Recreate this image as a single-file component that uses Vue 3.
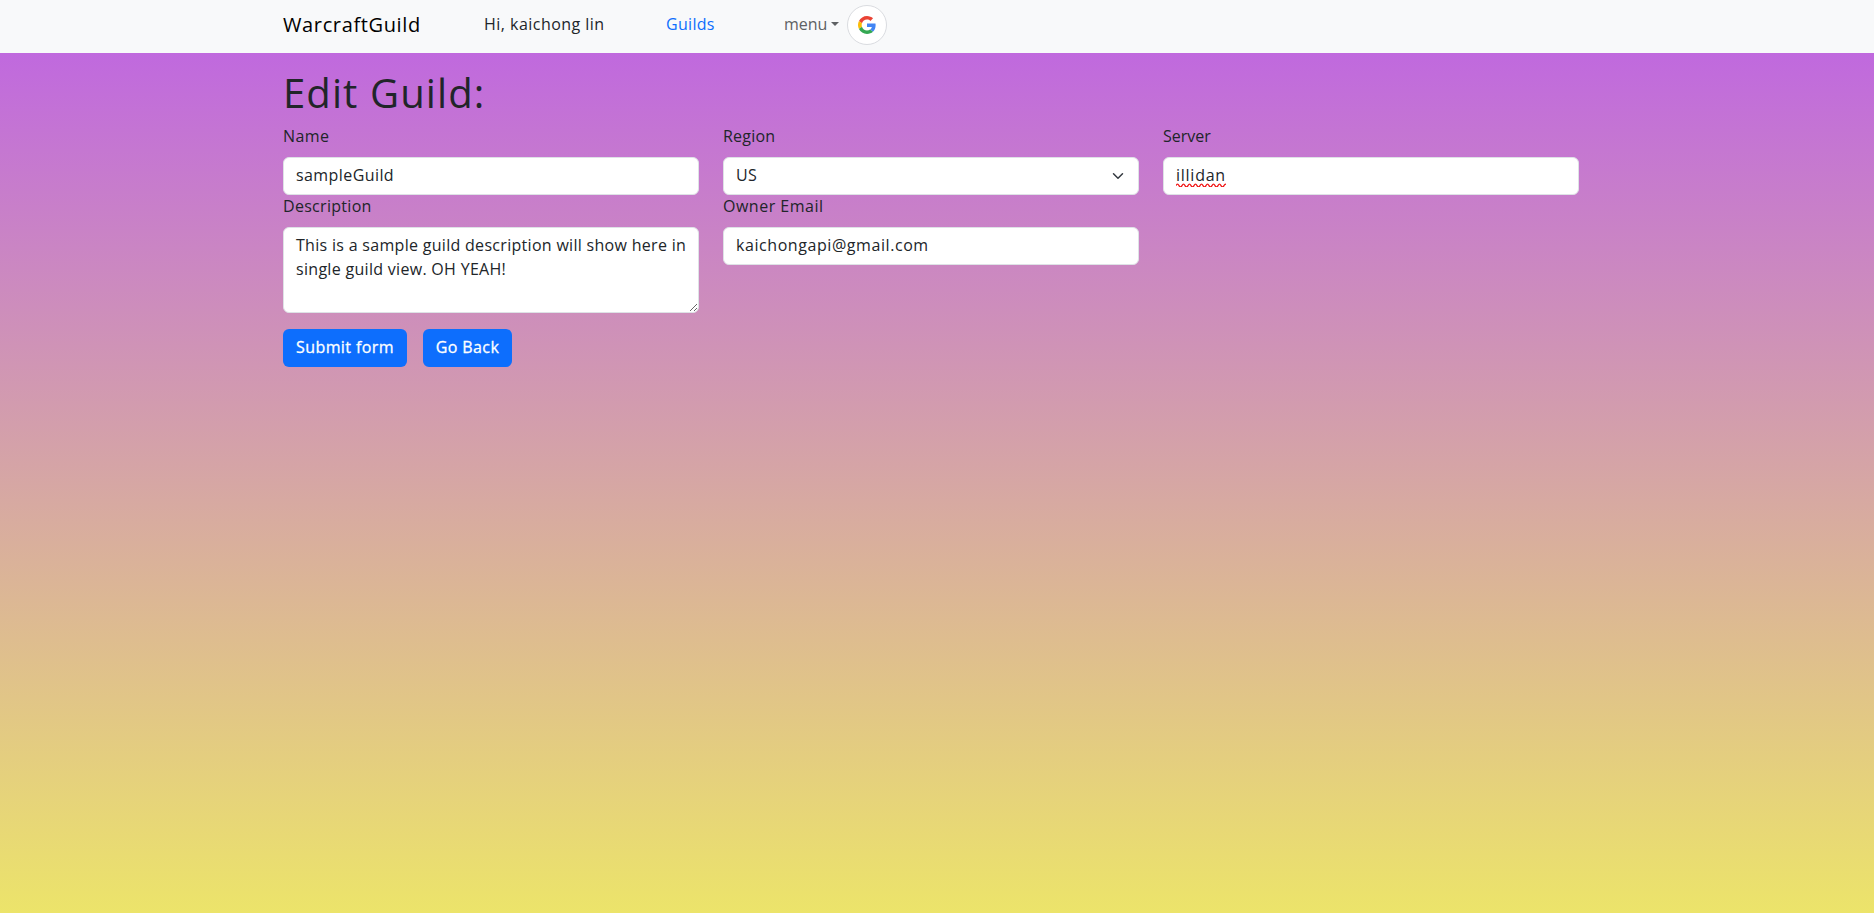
<script setup>
import { ref } from 'vue'

const guild = ref({
  name: 'sampleGuild',
  region: 'US',
  server: 'illidan',
  description: 'This is a sample guild description will show here in single guild view. OH YEAH!',
  email: 'kaichongapi@gmail.com',
})
</script>

<template>
  <div class="page">
    <nav class="navbar">
      <div class="container nav-inner">
        <a class="brand">WarcraftGuild</a>
        <span class="greeting">Hi, kaichong lin</span>
        <a class="guilds">Guilds</a>
        <a class="menu"><span class="menu-text">menu</span><i class="caret"></i></a>
        <button class="google" type="button" aria-label="Google">
          <svg viewBox="0 0 48 48" width="18" height="18">
            <path fill="#EA4335" d="M24 9.5c3.54 0 6.71 1.22 9.21 3.6l6.85-6.85C35.9 2.38 30.47 0 24 0 14.62 0 6.51 5.38 2.56 13.22l7.98 6.19C12.43 13.72 17.74 9.5 24 9.5z" />
            <path fill="#4285F4" d="M46.98 24.55c0-1.57-.15-3.09-.38-4.55H24v9.02h12.94c-.58 2.96-2.26 5.48-4.78 7.18l7.73 6c4.51-4.18 7.09-10.36 7.09-17.65z" />
            <path fill="#FBBC05" d="M10.53 28.59c-.48-1.45-.76-2.99-.76-4.59s.27-3.14.76-4.59l-7.98-6.19C.92 16.46 0 20.12 0 24c0 3.88.92 7.54 2.56 10.78l7.97-6.19z" />
            <path fill="#34A853" d="M24 48c6.48 0 11.93-2.13 15.89-5.81l-7.73-6c-2.15 1.45-4.92 2.3-8.16 2.3-6.26 0-11.57-4.22-13.47-9.91l-7.98 6.19C6.51 42.62 14.62 48 24 48z" />
          </svg>
        </button>
      </div>
    </nav>

    <main class="container">
      <h1>Edit Guild:</h1>
      <form @submit.prevent>
        <div class="grid">
          <div>
            <label class="l-name" for="name">Name</label>
            <input id="name" v-model="guild.name" class="control c-name" />
          </div>
          <div>
            <label class="l-region" for="region">Region</label>
            <div class="field">
              <select id="region" v-model="guild.region" class="control c-region">
                <option>US</option>
                <option>EU</option>
              </select>
              <svg class="chevron" viewBox="0 0 16 16" width="16" height="12">
                <path d="m2 5 6 6 6-6" fill="none" stroke="#343a40" stroke-width="2" stroke-linecap="round" stroke-linejoin="round" />
              </svg>
            </div>
          </div>
          <div>
            <label for="server">Server</label>
            <div class="field">
              <input id="server" v-model="guild.server" class="control c-server" />
              <svg class="squiggle" width="50" height="4" viewBox="0 0 50 4">
                <path d="M0 2.6 q1.5 -2.8 3 0 t3 0 3 0 3 0 3 0 3 0 3 0 3 0 3 0 3 0 3 0 3 0 3 0 3 0 3 0 3 0 3 0" fill="none" stroke="#f01818" stroke-width="1.3" />
              </svg>
            </div>
          </div>
          <div>
            <label class="l-desc" for="desc">Description</label>
            <textarea id="desc" v-model="guild.description" class="control c-desc" rows="3" spellcheck="false"></textarea>
          </div>
          <div>
            <label class="l-owner" for="email">Owner Email</label>
            <input id="email" v-model="guild.email" class="control c-email" />
          </div>
        </div>
        <div class="actions">
          <button class="btn submit" type="submit">Submit form</button>
          <button class="btn back" type="button">Go Back</button>
        </div>
      </form>
    </main>
  </div>
</template>

<style>
body { margin: 0; overflow: hidden; }
</style>

<style scoped>
* { box-sizing: border-box; }
.page {
  height: 100vh;
  display: flex;
  flex-direction: column;
  font: 400 16px/24px "Open Sans", sans-serif;
  color: #212529;
  background: linear-gradient(#c069de 53px, #ece46a);
}
.container { width: 1308px; margin: 0 auto; padding-right: 12px; }
.navbar { height: 53px; background: #f8f9fa; }
.nav-inner { display: flex; height: 48px; align-items: center; white-space: nowrap; }
.brand { width: 201px; font-size: 20px; color: #000; letter-spacing: 0.63px; padding-top: 1px; }
.greeting { width: 182px; letter-spacing: 0.47px; }
.guilds { width: 118px; color: #0d6efd; letter-spacing: 0.3px; }
.menu { width: 63px; color: #5e6163; display: flex; align-items: center; }
.menu-text { width: 47px; }
.caret { border: 4.5px solid transparent; border-top-color: currentColor; border-bottom: 0; }
.google {
  width: 40px; height: 40px; padding: 0; border: 1px solid #dadce0; border-radius: 50%;
  background: #fff; display: flex; align-items: center; justify-content: center;
  margin-top: 2px;
}
h1 {
  margin: 0; padding-top: 16px; height: 71px; font-weight: 400; font-size: 40px;
  line-height: 48px; letter-spacing: 1.1px;
}
.grid { display: grid; grid-template-columns: repeat(3, 416px); column-gap: 24px; align-items: start; }
label { display: block; width: max-content; height: 24px; margin-bottom: 9px; }
.grid > :nth-child(n + 4) { margin-top: -1px; }
.l-name { letter-spacing: 0.4px; }
.l-region { letter-spacing: 0.2px; }
.l-desc { letter-spacing: 0.3px; }
.l-owner { letter-spacing: 0.5px; }
.control {
  appearance: none; display: block; width: 100%; height: 38px; padding: 5px 12px 7px; margin: 0;
  border: 1px solid #dee2e6; border-radius: 6px; background: #fff; color: #212529;
  font: inherit; outline: 0;
}
.c-name { letter-spacing: 0.42px; }
.c-region { letter-spacing: 0.3px; }
.c-server { letter-spacing: 0.75px; }
.c-desc { height: 86px; padding-right: 4px; resize: vertical; overflow: hidden; letter-spacing: 0.3px; }
.c-email { letter-spacing: 0.57px; }
.field { position: relative; }
.chevron { position: absolute; right: 13px; top: 13px; pointer-events: none; }
.squiggle { position: absolute; left: 13px; top: 26px; }
.actions { display: flex; gap: 16px; margin-top: 16px; }
.btn {
  height: 38px; padding: 0 0 2px; border: 0; border-radius: 6px; background: #0d6efd; color: #fff;
  font: inherit; -webkit-text-stroke: 0.3px #fff; letter-spacing: 0.4px;
}
.submit { width: 124px; }
.back { width: 89px; }
</style>
